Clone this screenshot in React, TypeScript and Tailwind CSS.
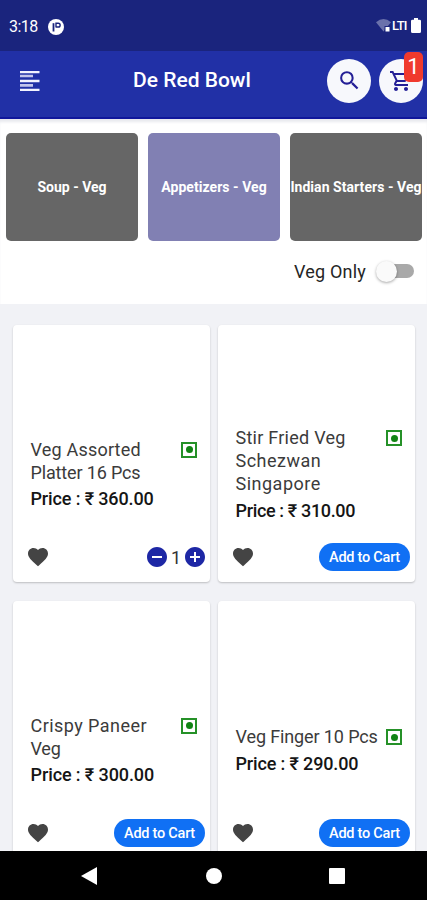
import { useState } from "react";
import { MdAddCircle, MdFavorite, MdOutlineShoppingCart, MdRemoveCircle, MdSearch } from "react-icons/md";

type Item = {
  id: number;
  lines: { text: string; cls: string }[];
  price: string;
  priceCls: string;
  initialQty: number;
};

const CATEGORIES = [
  { id: "soup", label: "Soup - Veg", cls: "tracking-[0px]" },
  { id: "appetizers", label: "Appetizers - Veg", cls: "tracking-[0.05px]" },
  { id: "indian", label: "Indian Starters - Veg", cls: "tracking-[0.05px]" },
];

const ITEMS: Item[] = [
  {
    id: 1,
    lines: [
      { text: "Veg Assorted", cls: "tracking-[0.2px]" },
      { text: "Platter 16 Pcs", cls: "tracking-[-0.15px]" },
    ],
    price: "360.00",
    priceCls: "tracking-[-0.13px]",
    initialQty: 1,
  },
  {
    id: 2,
    lines: [
      { text: "Stir Fried Veg", cls: "tracking-[0.25px]" },
      { text: "Schezwan", cls: "tracking-[0.5px]" },
      { text: "Singapore", cls: "tracking-[0.5px]" },
    ],
    price: "310.00",
    priceCls: "tracking-[-0.35px]",
    initialQty: 0,
  },
  {
    id: 3,
    lines: [
      { text: "Crispy Paneer", cls: "tracking-[0.45px]" },
      { text: "Veg", cls: "tracking-[-0.2px]" },
    ],
    price: "300.00",
    priceCls: "tracking-[-0.1px]",
    initialQty: 0,
  },
  {
    id: 4,
    lines: [{ text: "Veg Finger 10 Pcs", cls: "tracking-[-0.12px]" }],
    price: "290.00",
    priceCls: "tracking-[-0.15px]",
    initialQty: 0,
  },
];

function StatusBar() {
  return (
    <div className="flex h-[51px] shrink-0 items-center justify-between bg-[#1a247d] pl-[9px] pr-[6px] text-white">
      <div className="flex items-center gap-[11px] pt-[2px]">
        <span className="w-[28px] text-[16px] leading-none tracking-[-0.5px]">3:18</span>
        <svg width="16" height="16" viewBox="0 0 16 16">
          <circle cx="8" cy="8" r="8" fill="#fff" />
          <path d="M5.500 12.500V4.200" stroke="#1a247d" strokeWidth="1.800" />
          <path d="M8 8.500V4.300h2.300a1.700 1.700 0 0 1 0 3.700H8" fill="none" stroke="#1a247d" strokeWidth="1.400" />
        </svg>
      </div>
      <div className="flex items-center">
        <svg width="15" height="13" viewBox="0 0 15 13">
          <path d="M0 3.2Q7.5-3 15 3.2L7.5 12.5Z" fill="#6a71ab" />
          <rect x="9" y="7.5" width="5" height="5.5" fill="#fff" stroke="#1a247d" />
        </svg>
        <span className="ml-[1px] w-[15px] text-[13px] font-medium leading-none tracking-[-0.8px]">LTI</span>
        <svg className="ml-[4px]" width="10" height="15" viewBox="0 0 10 15">
          <path d="M3 0h4v1.7h1.5Q10 1.7 10 3v10.5Q10 15 8.500 15h-7Q0 15 0 13.500V3Q0 1.700 1.500 1.700H3Z" fill="#fff" />
        </svg>
      </div>
    </div>
  );
}

function Header({ cartCount }: { cartCount: number }) {
  return (
    <header className="flex h-[68px] shrink-0 items-center border-b-2 border-[#10179b] bg-[#2130a6] pb-[7px] pl-5 pr-1">
      <button type="button">
        <svg width="20" height="20" viewBox="0 0 20 20">
          <path d="M0 1.200h19.500M0 10h19.500M0 18.800h19.500" stroke="#f3f3ff" strokeWidth="2.300" />
          <path d="M0 5h13M0 14.400h13" stroke="#c3c5ec" strokeWidth="2.600" />
        </svg>
      </button>
      <h1 className="mb-[2px] ml-[93px] w-[194px] whitespace-nowrap text-[21px] font-medium leading-[26px] text-white">De Red Bowl</h1>
      <button type="button" className="flex size-11 shrink-0 items-center justify-center rounded-full bg-[#f7f8fc] text-[#241f96]">
        <MdSearch size={25} />
      </button>
      <button type="button" className="relative ml-2 flex size-11 shrink-0 items-center justify-center rounded-full bg-[#f7f8fc] text-[#241f96]">
        <MdOutlineShoppingCart size={24} />
        <span className="absolute right-0 top-[-7px] flex h-[30px] w-[19px] items-center justify-center rounded-[5px] bg-[#f03a2d] text-[22px] text-white">
          {cartCount}
        </span>
      </button>
    </header>
  );
}

function VegMark() {
  return (
    <span className="mt-[3px] flex size-[16px] shrink-0 items-center justify-center border-2 border-[#259128]">
      <span className="size-[7px] rounded-full bg-[#118414]" />
    </span>
  );
}

function ItemCard({ item }: { item: Item }) {
  const [qty, setQty] = useState(item.initialQty);

  return (
    <div className="flex h-[257px] flex-col rounded-[4px] bg-white pt-[101px] shadow-[0_1px_2px_rgba(0,0,0,0.22)]">
      <div className="flex h-[98px] flex-col justify-center pl-[17.5px] pr-[13px]">
        <div className="flex justify-between">
          <h2 className="whitespace-nowrap text-[18px] leading-[22.7px] text-[#3b3b3b]">
            {item.lines.map((l) => (
              <span key={l.text} className={`block ${l.cls}`}>{l.text}</span>
            ))}
          </h2>
          <VegMark />
        </div>
        <p className={`mt-[2px] whitespace-nowrap text-[18px] font-medium leading-[25px] text-[#151515] ${item.priceCls}`}>
          Price : ₹ {item.price}
        </p>
      </div>
      <div className="mt-[19px] flex h-[28px] items-center justify-between pl-[13px] pr-[5px]">
        <MdFavorite size={24} className="text-[#444]" />
        {qty > 0 ? (
          <div className="mr-[-2px] flex items-center text-[#1d27a5]">
            <button type="button" onClick={() => setQty(qty - 1)}>
              <MdRemoveCircle size={24} />
            </button>
            <span className="w-[14px] text-center text-[18px] text-[#333]">{qty}</span>
            <button type="button" onClick={() => setQty(qty + 1)}>
              <MdAddCircle size={24} />
            </button>
          </div>
        ) : (
          <button
            type="button"
            className="flex h-[28px] w-[91px] items-center justify-center whitespace-nowrap rounded-full bg-[#1070f4] pt-[2px] text-[14.5px] font-medium tracking-[-0.25px] text-white"
            onClick={() => setQty(1)}
          >
            Add to Cart
          </button>
        )}
      </div>
    </div>
  );
}

export default function App() {
  const [active, setActive] = useState("appetizers");
  const [vegOnly, setVegOnly] = useState(false);

  return (
    <div className="flex h-[900px] w-[427px] flex-col overflow-hidden bg-[#f1f2f6] font-['Roboto','Noto_Sans',sans-serif]">
      <StatusBar />
      <Header cartCount={1} />

      <section className="h-[185px] shrink-0 bg-white shadow-[inset_0_4px_3px_-1px_#e8e9ee]">
        <div className="flex justify-between pl-[6px] pr-[5px] pt-[14px]">
          {CATEGORIES.map((c) => (
            <button
              key={c.id}
              type="button"
              onClick={() => setActive(c.id)}
              className={`flex h-[108px] w-[132px] items-center justify-center whitespace-nowrap rounded-[5px] text-[14px] font-bold text-white ${
                active === c.id ? "bg-[#8180b3]" : "bg-[#666]"
              }`}
            >
              <span className={c.cls}>{c.label}</span>
            </button>
          ))}
        </div>
        <div className="mt-[18px] flex h-6 items-center justify-end pr-[13px]">
          <span className="text-[18px] tracking-[0.2px] text-[#252525]">Veg Only</span>
          <button type="button" className="ml-[14px] flex h-[14px] w-[34px] items-center rounded-full bg-[#a9a9a9]" onClick={() => setVegOnly(!vegOnly)}>
            <span
              className={`size-[21px] shrink-0 rounded-full bg-[#fafafa] shadow-[0_1px_3px_rgba(0,0,0,0.35)] ${
                vegOnly ? "ml-[15px]" : "ml-[-4px]"
              }`}
            />
          </button>
        </div>
      </section>

      <main className="grid min-h-0 flex-1 grid-cols-[197px_197px] content-start gap-x-2 gap-y-[19px] overflow-hidden pl-[13px] pt-[21px]">
        {ITEMS.map((item) => (
          <ItemCard key={item.id} item={item} />
        ))}
      </main>

      {/* Android navigation */}
      <nav className="flex h-[49px] shrink-0 items-center justify-between bg-black pl-[81px] pr-[82px]">
        <svg width="16" height="18" viewBox="0 0 16 18" fill="#fff">
          <path d="M16 0v18L0 9Z" />
        </svg>
        <span className="ml-[2px] size-[16px] rounded-full bg-white" />
        <span className="size-[16px] rounded-[1px] bg-white" />
      </nav>
    </div>
  );
}
